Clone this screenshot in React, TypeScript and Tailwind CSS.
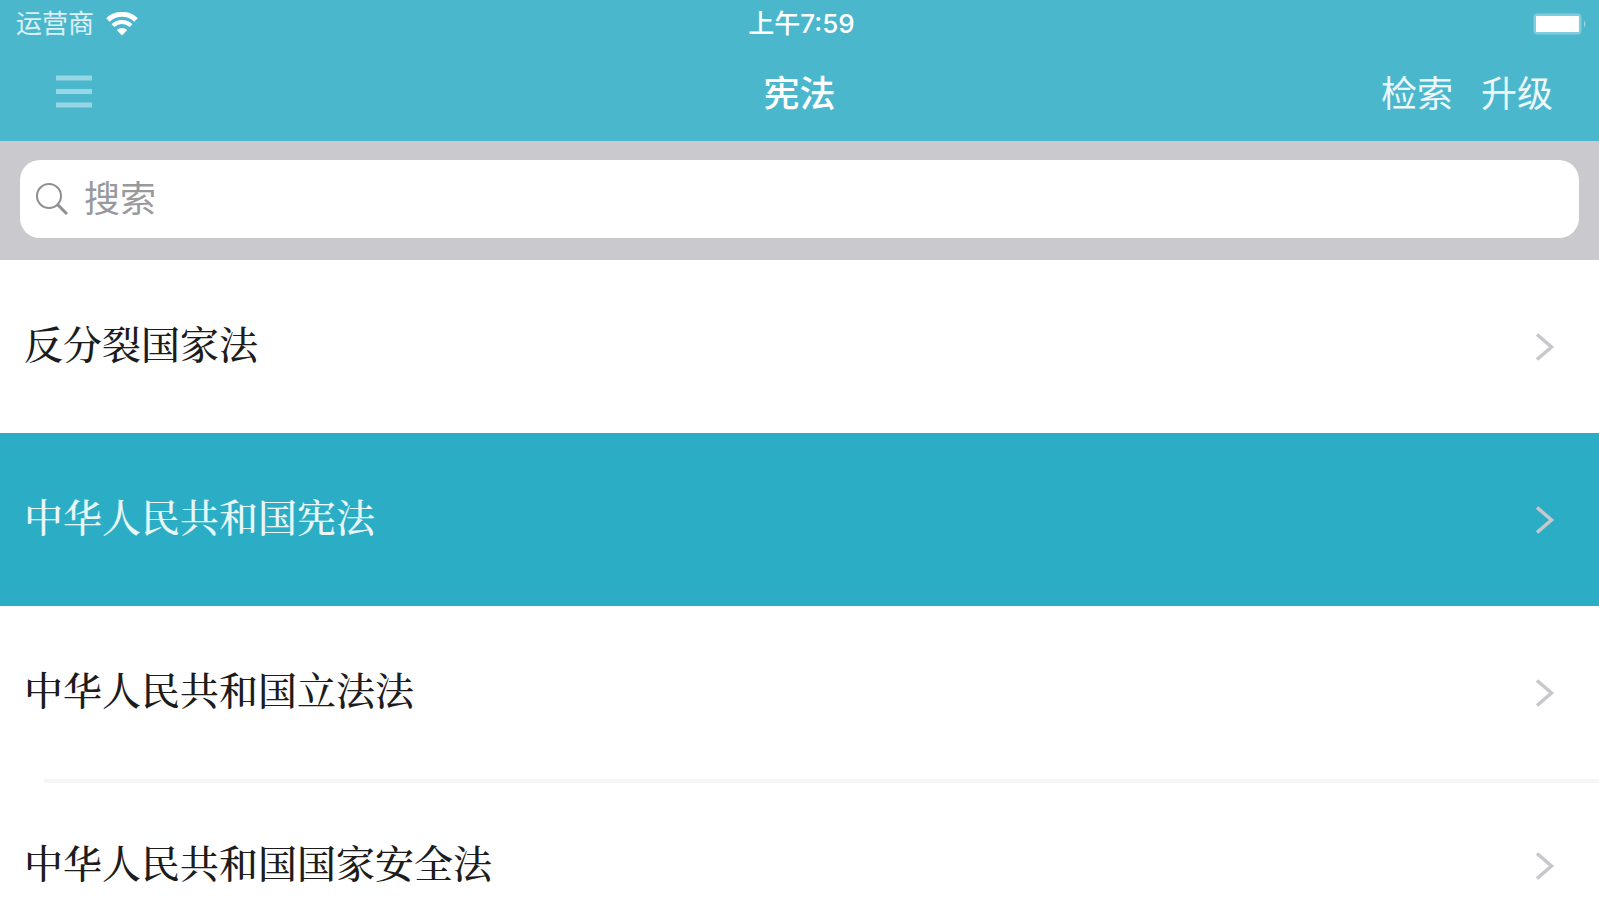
import { useState } from "react";

const laws = [
  "反分裂国家法",
  "中华人民共和国宪法",
  "中华人民共和国立法法",
  "中华人民共和国国家安全法",
];

function WifiIcon() {
  return (
    <svg className="h-6 w-8" viewBox="0 0 32 24" fill="none" aria-hidden="true">
      <path d="M2 8a20 20 0 0 1 28 0" stroke="white" strokeWidth="5" />
      <path d="M7 13.6a13 13 0 0 1 18 0" stroke="white" strokeWidth="4" />
      <path d="M16 23.5l-5.2-5.4a7.5 7.5 0 0 1 10.4 0z" fill="white" />
    </svg>
  );
}

function BatteryIcon() {
  return (
    <svg className="h-6 w-14" viewBox="0 0 56 24" aria-hidden="true">
      <rect x="2.5" y="1.5" width="48" height="21" rx="4" fill="white" fillOpacity="0.3" />
      <rect x="5" y="4" width="43" height="16" rx="1" fill="white" />
      <path d="M53 8.5q3 3.5 0 7z" fill="white" fillOpacity="0.4" />
    </svg>
  );
}

function StatusBar() {
  return (
    <div className="grid h-12 grid-cols-3 items-center pl-4 pr-3 text-[26px] leading-none text-white">
      <div className="flex items-center gap-3 text-white/80">
        <span>运营商</span>
        <WifiIcon />
      </div>
      <div className="text-center font-medium">上午7:59</div>
      <div className="flex justify-end">
        <BatteryIcon />
      </div>
    </div>
  );
}

function NavBar() {
  return (
    <div className="grid h-[93px] grid-cols-3 items-center px-[46px] pb-0.5 text-[36px] leading-none text-white">
      <button type="button" aria-label="菜单" className="flex w-14 items-center pb-1.5 pl-2">
        <svg className="h-9 w-10" viewBox="0 0 40 36" aria-hidden="true">
          <path d="M2 5h36M2 18.5h36M2 32h36" stroke="#97d7e5" strokeWidth="5" />
        </svg>
      </button>
      <h1 className="text-center font-medium">宪法</h1>
      <div className="flex justify-end gap-7 text-white/90">
        <button type="button">检索</button>
        <button type="button">升级</button>
      </div>
    </div>
  );
}

function SearchBar({ value, onChange }: { value: string; onChange: (v: string) => void }) {
  return (
    <div className="h-[119px] bg-[#c9c9ce] px-5 pt-[19px]">
      <label className="flex h-[78px] items-center gap-4 rounded-[20px] bg-white pl-4">
        <svg className="h-8 w-8 shrink-0" viewBox="0 0 32 32" fill="none" stroke="#8e8e93" aria-hidden="true">
          <circle cx="13" cy="13" r="12" strokeWidth="2" />
          <path d="M21.5 21.5L31 31" strokeWidth="3" />
        </svg>
        <input
          type="search"
          aria-label="搜索"
          placeholder="搜索"
          value={value}
          onChange={(e) => onChange(e.target.value)}
          className="min-w-0 flex-1 bg-transparent text-[36px] text-black outline-none placeholder:text-[#98989d]"
        />
      </label>
    </div>
  );
}

function LawRow({ title, active, divider, onSelect }: { title: string; active: boolean; divider: boolean; onSelect: () => void }) {
  return (
    <li className={active ? "bg-[#2badc5] text-white/90" : "text-[#1c1c1c]"}>
      <button
        type="button"
        onClick={onSelect}
        className="flex h-[173px] w-full items-center justify-between pl-6 pr-11 text-left text-[39px] font-medium leading-none"
      >
        <span className="pb-2">{title}</span>
        <svg className="h-7 w-5" viewBox="0 0 20 28" fill="none" stroke="#c7c7cc" strokeWidth="3.5" aria-hidden="true">
          <path d="M2 1.5L16.5 14L2 26.5" />
        </svg>
      </button>
      {divider && <div className="-mb-1 ml-11 h-1 bg-[#f5f5f6]" />}
    </li>
  );
}

export default function App() {
  const [query, setQuery] = useState("");
  const [selected, setSelected] = useState(1);

  return (
    <div className="flex h-screen flex-col overflow-hidden bg-white font-['Inter','Noto_Sans_CJK_SC',sans-serif]">
      <header className="shrink-0 bg-[#4bb7cd]">
        <StatusBar />
        <NavBar />
      </header>
      <SearchBar value={query} onChange={setQuery} />
      <ul className="min-h-0 flex-1 overflow-hidden font-['Noto_Serif_CJK_SC','Noto_Sans_CJK_SC',serif]">
        {laws.map((title, i) => (
          <LawRow
            key={title}
            title={title}
            active={i === selected}
            divider={i !== selected && i + 1 !== selected && i < laws.length - 1}
            onSelect={() => setSelected(i)}
          />
        ))}
      </ul>
    </div>
  );
}
